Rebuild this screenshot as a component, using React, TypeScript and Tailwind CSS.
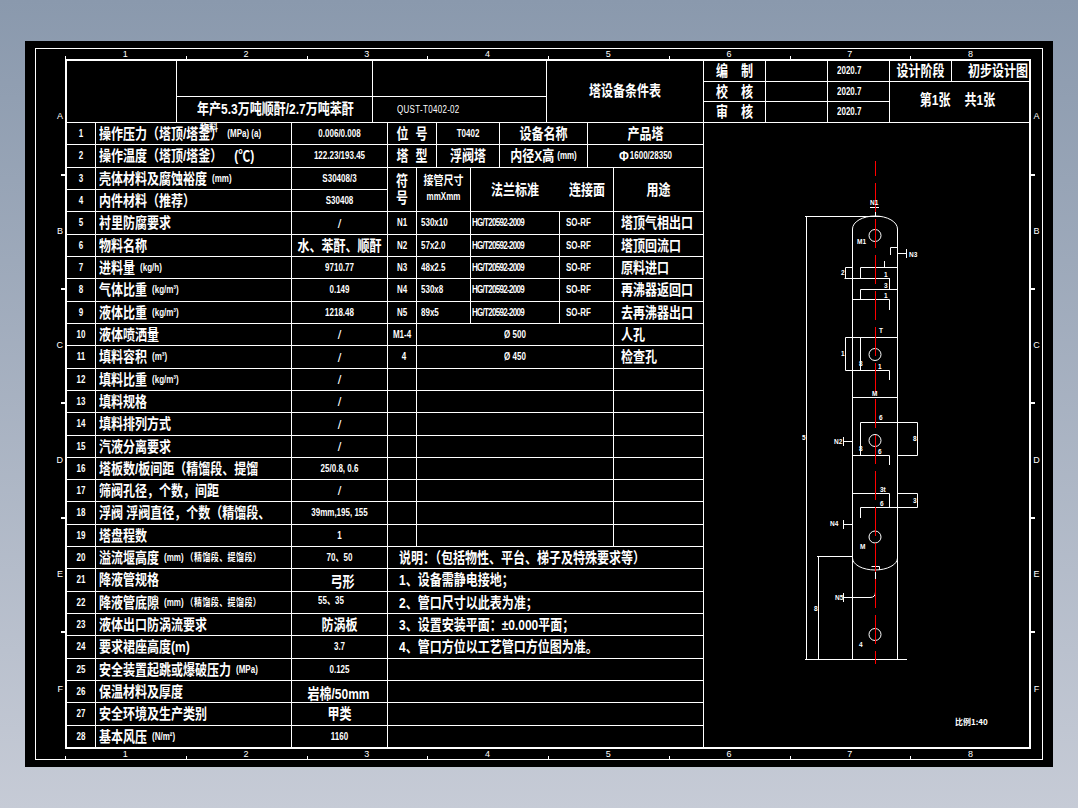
import React from 'react';

const zh = 'inline-block font-bold text-[12px] leading-none scale-y-[1.25]';
const num = 'inline-block font-bold text-[8px] leading-none scale-y-[1.4]';
const small = 'inline-block font-bold text-[8px] leading-none scale-y-[1.3]';
const slash = 'inline-block font-normal text-[13px] leading-none';

interface RowData {
    label: string;
    unit?: string;
    bigUnit?: string;
    note?: string;
    value: string;
    cjk?: boolean;
    offset?: string;
}

const rows: RowData[] = [
    { label: '操作压力（塔顶/塔釜）', unit: '(MPa) (a)', value: '0.006/0.008' },
    { label: '操作温度（塔顶/塔釜）', bigUnit: '(℃)', value: '122.23/193.45' },
    { label: '壳体材料及腐蚀裕度', unit: '(mm)', value: 'S30408/3' },
    { label: '内件材料（推荐）', value: 'S30408' },
    { label: '衬里防腐要求', value: '/' },
    { label: '物料名称', value: '水、苯酐、顺酐', cjk: true },
    { label: '进料量', unit: '(kg/h)', value: '9710.77' },
    { label: '气体比重', unit: '(kg/m³)', value: '0.149' },
    { label: '液体比重', unit: '(kg/m³)', value: '1218.48' },
    { label: '液体喷洒量', value: '/' },
    { label: '填料容积', unit: '(m³)', value: '/' },
    { label: '填料比重', unit: '(kg/m³)', value: '/' },
    { label: '填料规格', value: '/' },
    { label: '填料排列方式', value: '/' },
    { label: '汽液分离要求', value: '/' },
    { label: '塔板数/板间距（精馏段、提馏', value: '25/0.8, 0.6' },
    { label: '筛阀孔径，个数，间距', value: '/' },
    { label: '浮阀 浮阀直径，个数（精馏段、', value: '39mm,195, 155' },
    { label: '塔盘程数', value: '1' },
    { label: '溢流堰高度', unit: '(mm)', note: '（精馏段、提馏段）', value: '70、50' },
    { label: '降液管规格', value: '弓形', cjk: true, offset: 'pt-[4px] pl-[6px]' },
    { label: '降液管底隙', unit: '(mm)', note: '（精馏段、提馏段）', value: '55、35', offset: 'pr-[17px] pb-[3px]' },
    { label: '液体出口防涡流要求', value: '防涡板', cjk: true },
    { label: '要求裙座高度(m)', value: '3.7' },
    { label: '安全装置起跳或爆破压力', unit: '(MPa)', value: '0.125' },
    { label: '保温材料及厚度', value: '岩棉/50mm', cjk: true, offset: 'pt-[5px] pr-[2px]' },
    { label: '安全环境及生产类别', value: '甲类', cjk: true },
    { label: '基本风压', unit: '(N/m²)', value: '1160' },
];

const nozzles = [
    ['N1', '530x10', '塔顶气相出口'],
    ['N2', '57x2.0', '塔顶回流口'],
    ['N3', '48x2.5', '原料进口'],
    ['N4', '530x8', '再沸器返回口'],
    ['N5', '89x5', '去再沸器出口'],
];

const notes = [
    '说明：（包括物性、平台、梯子及特殊要求等）',
    '1、设备需静电接地；',
    '2、管口尺寸以此表为准；',
    '3、设置安装平面：±0.000平面；',
    '4、管口方位以工艺管口方位图为准。',
    '',
    '',
    '',
    '',
];

const Cell: React.FC<{ className?: string; children?: React.ReactNode }> = ({ className = '', children }) => (
    <div className={`flex min-w-0 items-center whitespace-nowrap border-b border-r border-white ${className}`}>{children}</div>
);

const Ruler: React.FC = () => (
    <div className="ml-[29px] mr-[11px] grid h-[10px] grid-cols-8">
        {[1, 2, 3, 4, 5, 6, 7, 8].map(n => (
            <div key={n} className="relative flex items-center justify-center text-[9px] leading-none">
                {n}
                <div className="absolute bottom-0 left-0 h-[3px] w-[1px] bg-white" />
            </div>
        ))}
    </div>
);

const zones = ['A', 'B', 'C', 'D', 'E', 'F'];

const SideZones: React.FC<{ right?: boolean }> = ({ right }) => (
    <div className={`grid grid-rows-[117px_114px_114px_115px_114px_116px] ${right ? 'w-[11px]' : 'w-[29px]'}`}>
        {zones.map((z, i) => (
            <div key={z} className={`relative flex items-center pb-[3px] text-[9px] leading-none ${right ? 'justify-center' : 'justify-end pr-[2px]'}`}>
                {z}
                {i < 5 && <div className={`absolute bottom-0 h-[2px] w-[4px] bg-white ${right ? 'left-0' : 'right-0'}`} />}
            </div>
        ))}
    </div>
);

const TitleBlock: React.FC = () => (
    <div className="flex h-[62px] border-b border-white">
        <div className="w-[110px] border-r border-white" />
        <div className="flex w-[196px] flex-col border-r border-white">
            <div className="h-[36px] border-b border-white" />
            <div className="flex flex-1 items-center pl-[20px] pb-[1px]">
                <span className={zh}>年产5.3万吨顺酐/2.7万吨苯酐</span>
            </div>
        </div>
        <div className="flex w-[174px] flex-col border-r border-white">
            <div className="h-[36px] border-b border-white" />
            <div className="flex flex-1 items-center pl-[24px]">
                <span className={num + ' font-normal tracking-[0.3px]'}>QUST-T0402-02</span>
            </div>
        </div>
        <div className="flex w-[157px] items-center justify-center border-r border-white pb-[2px]">
            <span className={zh}>塔设备条件表</span>
        </div>
        <div className="grid w-[186px] grid-cols-[62px_62px_62px] grid-rows-[21px_20px_20px]">
            {[
                ['编', '制'],
                ['校', '核'],
                ['审', '核'],
            ].map(([a, b], i) => (
                <React.Fragment key={a}>
                    <Cell className={`justify-center gap-[13px] ${i === 2 ? 'border-b-0' : ''}`}>
                        <span className={zh}>{a}</span>
                        <span className={zh}>{b}</span>
                    </Cell>
                    <Cell className={i === 2 ? 'border-b-0' : ''} />
                    <Cell className={`pl-[9px] ${i === 2 ? 'border-b-0' : ''}`}>
                        <span className={num}>2020.7</span>
                    </Cell>
                </React.Fragment>
            ))}
        </div>
        <div className="flex flex-1 flex-col">
            <div className="flex h-[21px] border-b border-white">
                <div className="flex w-[62px] items-center justify-center border-r border-white">
                    <span className={zh}>设计阶段</span>
                </div>
                <div className="flex flex-1 items-center justify-end pr-[1px]">
                    <span className={zh}>初步设计图</span>
                </div>
            </div>
            <div className="flex flex-1 items-center justify-center gap-[14px] pr-[4px] pb-[4px]">
                <span className={zh}>第1张</span>
                <span className={zh}>共1张</span>
            </div>
        </div>
    </div>
);

const LeftTable: React.FC = () => (
    <div className="grid w-[321px] grid-cols-[29px_196px_96px] grid-rows-[22px_23px_22px_22px_23px_22px_22px_23px_22px_22px_23px_22px_22px_23px_22px_22px_22px_23px_22px_22px_23px_22px_22px_23px_22px_22px_23px_22px]">
        {rows.map((r, i) => (
            <React.Fragment key={i}>
                <Cell className="justify-center">
                    <span className={num}>{i + 1}</span>
                </Cell>
                <Cell className="relative pl-[3px]">
                    <span className={zh}>{r.label}</span>
                    {r.bigUnit && <span className={`${zh} ml-[12px]`}>{r.bigUnit}</span>}
                    {r.unit && <span className={`${small} ml-[5px]`}>{r.unit}</span>}
                    {r.note && <span className={`${small} ml-[2px] tracking-[0.4px]`}>{r.note}</span>}
                    {i === 0 && <span className="absolute left-[104px] top-[1px] text-[9px] font-bold leading-none">物料</span>}
                </Cell>
                <Cell className={`justify-center ${r.offset || ''}`}>
                    <span className={r.value === '/' ? slash : r.cjk ? zh : num}>{r.value}</span>
                </Cell>
            </React.Fragment>
        ))}
    </div>
);

const RightTable: React.FC = () => (
    <div className="flex w-[316px] flex-col">
        <div className="grid h-[22px] grid-cols-[49px_63px_88px_116px]">
            <Cell className="justify-center gap-[7px]">
                <span className={zh}>位</span>
                <span className={zh}>号</span>
            </Cell>
            <Cell className="justify-center">
                <span className={num}>T0402</span>
            </Cell>
            <Cell className="justify-center">
                <span className={zh}>设备名称</span>
            </Cell>
            <Cell className="justify-center">
                <span className={zh}>产品塔</span>
            </Cell>
        </div>
        <div className="grid h-[23px] grid-cols-[49px_63px_88px_116px]">
            <Cell className="justify-center gap-[7px]">
                <span className={zh}>塔</span>
                <span className={zh}>型</span>
            </Cell>
            <Cell className="justify-center">
                <span className={zh}>浮阀塔</span>
            </Cell>
            <Cell className="justify-center">
                <span className={zh}>内径X高</span>
                <span className={`${small} ml-[3px]`}>(mm)</span>
            </Cell>
            <Cell className="justify-center">
                <span className={`${zh} mr-[1px]`}>Φ</span>
                <span className={num}>1600/28350</span>
            </Cell>
        </div>
        <div className="grid grid-cols-[29px_54px_89px_54px_90px] grid-rows-[44px_23px_22px_22px_23px_22px_22px_23px_22px_22px_23px_22px_22px_22px_23px_22px]">
            <Cell className="flex-col justify-center gap-[5px]">
                <span className={zh}>符</span>
                <span className={zh}>号</span>
            </Cell>
            <Cell className="flex-col justify-center gap-[7px] pb-[2px]">
                <span className="inline-block text-[10px] font-bold leading-none scale-y-[1.2]">接管尺寸</span>
                <span className={small}>mmXmm</span>
            </Cell>
            <Cell className="col-span-2 gap-[30px] pl-[20px]">
                <span className={zh}>法兰标准</span>
                <span className={zh}>连接面</span>
            </Cell>
            <Cell className="justify-center">
                <span className={zh}>用途</span>
            </Cell>
            {nozzles.map(([id, size, use]) => (
                <React.Fragment key={id}>
                    <Cell className="justify-center">
                        <span className={num}>{id}</span>
                    </Cell>
                    <Cell className="pl-[4px]">
                        <span className={num}>{size}</span>
                    </Cell>
                    <Cell className="pl-[1px]">
                        <span className={`${num} tracking-[-0.7px]`}>HG/T20592-2009</span>
                    </Cell>
                    <Cell className="pl-[6px]">
                        <span className={num}>SO-RF</span>
                    </Cell>
                    <Cell className="pl-[7px]">
                        <span className={zh}>{use}</span>
                    </Cell>
                </React.Fragment>
            ))}
            <Cell className="justify-center">
                <span className={num}>M1-4</span>
            </Cell>
            <Cell className="col-span-3 justify-center">
                <span className={num}>Ø 500</span>
            </Cell>
            <Cell className="pl-[7px]">
                <span className={zh}>人孔</span>
            </Cell>
            <Cell className="justify-center pl-[4px]">
                <span className={num}>4</span>
            </Cell>
            <Cell className="col-span-3 justify-center">
                <span className={num}>Ø 450</span>
            </Cell>
            <Cell className="pl-[7px]">
                <span className={zh}>检查孔</span>
            </Cell>
            {[0, 1, 2, 3, 4, 5, 6, 7].map(i => (
                <React.Fragment key={i}>
                    <Cell />
                    <Cell className="col-span-3" />
                    <Cell />
                </React.Fragment>
            ))}
        </div>
        <div className="grid grid-rows-[22px_23px_22px_22px_23px_22px_22px_23px_22px]">
            {notes.map((n, i) => (
                <Cell key={i} className="pl-[11px]">
                    <span className={zh}>{n}</span>
                </Cell>
            ))}
        </div>
    </div>
);

const lines = [
    'M805 216.5H881', 'M806.5 216.5V659', 'M852.5 229A22.5 13 0 0 1 897.5 229',
    'M852.5 229V659', 'M897.5 229V659', 'M852.5 558A22.5 12 0 0 0 897.5 558',
    'M875.5 216V207.5', 'M870 207.5H879',
    'M897.5 253.5H906.5', 'M906.5 249V258', 'M897.5 247.5H890.5V255',
    'M884.5 261V267', 'M860.5 278V267.5H897.5', 'M844.5 278.5H889.5', 'M889.5 278V289.5',
    'M860.5 299V289.5H897.5', 'M852.5 299.5H889.5V310',
    'M852.5 267.5H845.5V278',
    'M897.5 337.5H845.5V370.5H889.5V380', 'M860.5 337V370',
    'M852.5 397.5H897.5',
    'M860.5 455V422.5H917.5V455.5H897.5', 'M852.5 455.5H889.5V465',
    'M852.5 441.5H843.5', 'M843.5 437V446',
    'M852.5 493.5H889.5V507', 'M897.5 493.5H917.5V507.5H860.5V518',
    'M852.5 524.5H843.5', 'M843.5 520V529',
    'M817 556.5H852.5', 'M818.5 556V659',
    'M875.5 570V592Q875.5 597.5 870 597.5H843.5', 'M843.5 593V602',
    'M871.5 566.5H875.5V570M875.5 566.5H879.5V570',
    'M805 659.5H907',
];

const labels: [number, number, string][] = [
    [870, 205, 'N1'], [857, 244, 'M1'], [909, 257, 'N3'], [841, 275, '2'], [884, 277, '1'], [884, 288, '3'], [884, 298, '1'],
    [879, 333, 'T'], [841, 356, '1'], [859, 366, '8'], [878, 369, '1'], [872, 396, 'M'], [879, 420, '6'], [913, 441, '8'],
    [859, 451, '8'], [878, 454, '6'], [834, 444, 'N2'], [802, 440, '5'], [880, 492, '3t'], [880, 506, '6'], [913, 503, '3'],
    [830, 526, 'N4'], [860, 549, 'M'], [835, 600, 'N5'], [814, 611, '8'], [859, 647, '4'],
];

const TowerDrawing: React.FC = () => (
    <svg viewBox="704 123 325 624" width="325" height="624" className="block">
        <g fill="none" stroke="#fff" strokeWidth="1">
            {lines.map(d => <path key={d} d={d} />)}
            {[235.5, 354.5, 440.5, 537, 634.5].map(cy => <circle key={cy} cx="875" cy={cy} r="6" />)}
        </g>
        <path d="M875.5 161V664" stroke="#ff0000" strokeWidth="1" strokeDasharray="29 7" strokeDashoffset="14" shapeRendering="crispEdges" />
        <g fill="#fff" fontSize="6.5" fontWeight="700" fontFamily="'Liberation Sans', sans-serif">
            {labels.map(([x, y, t]) => <text key={`${x}-${y}`} x={x} y={y}>{t}</text>)}
            <text x="955" y="725" fontSize="8" fontFamily="'Noto Sans CJK SC', sans-serif">比例1:40</text>
        </g>
    </svg>
);

export default function App() {
    return (
        <div className="h-[808px] w-[1078px] overflow-hidden bg-gradient-to-b from-[#8a99ad] to-[#c6cbd6] pl-[25px] pt-[41px] font-['Liberation_Sans','Noto_Sans_CJK_SC',sans-serif] text-white">
            <div className="h-[726px] w-[1028px] bg-black pl-[10px] pt-[7px]">
                <div className="flex h-[712px] w-[1008px] flex-col border border-white">
                    <Ruler />
                    <div className="flex h-[690px]">
                        <SideZones />
                        <div className="w-[966px] border-x-2 border-t-2 border-b border-white">
                            <TitleBlock />
                            <div className="flex">
                                <LeftTable />
                                <RightTable />
                                <div className="flex-1 border-b border-white">
                                    <TowerDrawing />
                                </div>
                            </div>
                        </div>
                        <SideZones right />
                    </div>
                    <Ruler />
                </div>
            </div>
        </div>
    );
}
